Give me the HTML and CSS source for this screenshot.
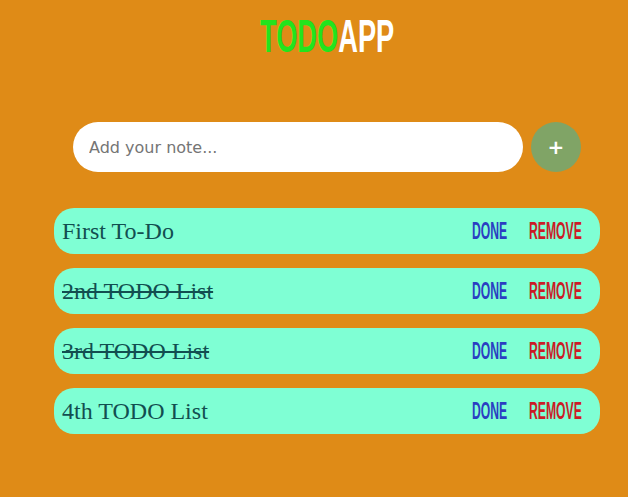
FILE: index.html
```html
<!DOCTYPE html>
<html>
<head>
<meta charset="utf-8">
<link rel="stylesheet" href="styles.css">
</head>
<body>
<div class="app">
  <h1 class="title"><span class="title-text"><span class="todo">TODO</span><span class="appword">APP</span></span></h1>
  <div class="add-row">
    <input class="note-input" type="text" placeholder="Add your note...">
    <button class="add-btn">+</button>
  </div>
  <ul class="list">
    <li class="item"><span class="item-text">First To-Do</span><span class="act done"><span class="act-text">DONE</span></span><span class="act remove"><span class="act-text">REMOVE</span></span></li>
    <li class="item"><span class="item-text struck">2nd TODO List</span><span class="act done"><span class="act-text">DONE</span></span><span class="act remove"><span class="act-text">REMOVE</span></span></li>
    <li class="item"><span class="item-text struck">3rd TODO List</span><span class="act done"><span class="act-text">DONE</span></span><span class="act remove"><span class="act-text">REMOVE</span></span></li>
    <li class="item"><span class="item-text">4th TODO List</span><span class="act done"><span class="act-text">DONE</span></span><span class="act remove"><span class="act-text">REMOVE</span></span></li>
  </ul>
</div>
</body>
</html>
```

FILE: styles.css
```css
html, body {
  margin: 0;
  padding: 0;
  background: #df8b17;
}
body {
  font-family: "Liberation Serif", serif;
}
.app {
  width: 546px;
  margin-left: 54px;
  padding-top: 12px;
}
.title {
  margin: 0;
  width: 134px;
  margin-left: 206px;
  font-family: "Liberation Sans", sans-serif;
  font-weight: bold;
  font-size: 47px;
  line-height: 47px;
  white-space: nowrap;
}
.title-text {
  display: inline-block;
  transform: scaleX(0.58);
  transform-origin: left center;
}
.todo { color: #22e41d; }
.appword { color: #ffffff; }
.add-row {
  display: flex;
  gap: 8px;
  margin: 63px 0 0 19px;
}
.note-input {
  box-sizing: border-box;
  width: 450px;
  height: 50px;
  border: none;
  border-radius: 25px;
  background: #ffffff;
  padding: 0 16px;
  font-family: "DejaVu Sans", sans-serif;
  font-size: 16px;
  color: #333;
  outline: none;
}
.note-input::placeholder {
  color: #757575;
}
.add-btn {
  width: 50px;
  height: 50px;
  border: none;
  border-radius: 50%;
  background: #80a466;
  color: #ffffff;
  font-family: "DejaVu Sans", sans-serif;
  font-weight: bold;
  font-size: 20px;
  padding: 0;
}
.list {
  list-style: none;
  margin: 36px 0 0 0;
  padding: 0;
  display: flex;
  flex-direction: column;
  gap: 14px;
}
.item {
  height: 46px;
  border-radius: 20px;
  background: #7fffd4;
  display: flex;
  align-items: center;
  padding: 0 17px 0 8px;
}
.item-text {
  flex: 1;
  font-size: 24px;
  color: #124e50;
}
.struck {
  text-decoration: line-through;
}
.act {
  font-family: "Liberation Sans", sans-serif;
  font-weight: bold;
  font-size: 23px;
  white-space: nowrap;
  line-height: 23px;
}
.act-text {
  display: inline-block;
  transform: scaleX(0.53);
  transform-origin: left center;
}
.done {
  width: 35px;
  color: #2b3fc2;
  margin-right: 22px;
}
.remove {
  width: 54px;
  color: #cb1c27;
}
```
